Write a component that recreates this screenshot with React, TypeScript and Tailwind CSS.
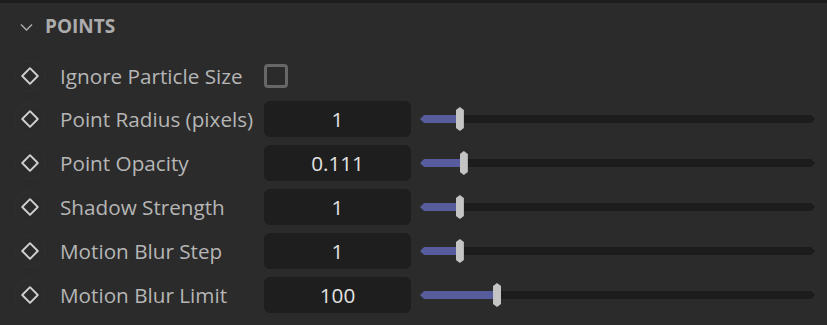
import React from "react";

type Row = {
  label: string;
  value: string;
  pct: number;
};

const rows: Row[] = [
  { label: "Point Radius (pixels)", value: "1", pct: 10.1 },
  { label: "Point Opacity", value: "0.111", pct: 11.1 },
  { label: "Shadow Strength", value: "1", pct: 10.1 },
  { label: "Motion Blur Step", value: "1", pct: 10.1 },
  { label: "Motion Blur Limit", value: "100", pct: 19.5 },
];

const KeyIcon = () => (
  <div className="w-8 h-8 rounded-full border border-[#303030] flex items-center justify-center shrink-0">
    <svg width="20" height="20" viewBox="0 0 20 20">
      <path
        d="M10 2.2 L17.8 10 L10 17.8 L2.2 10 Z"
        fill="none"
        stroke="#d0d0d0"
        strokeWidth="1.9"
        strokeLinejoin="round"
      />
    </svg>
  </div>
);

const Slider = ({ pct }: { pct: number }) => (
  <div className="relative flex-1 h-7 flex items-center">
    <div className="relative w-full h-2 bg-[#1c1c1c] [clip-path:polygon(4px_0,calc(100%-4px)_0,100%_50%,calc(100%-4px)_100%,4px_100%,0_50%)]">
      <div
        className="absolute left-0 top-0 h-full bg-[#575c9c]"
        style={{ width: `${pct}%` }}
      />
    </div>
    <div
      className="absolute top-[2px] w-2 h-6 -ml-1 bg-[#c4c4c4] [clip-path:polygon(50%_0,100%_3px,100%_calc(100%-3px),50%_100%,0_calc(100%-3px),0_3px)]"
      style={{ left: `${pct}%` }}
    />
  </div>
);

export default function App() {
  return (
    <div
      className="w-[827px] h-[325px] bg-[#2b2b2b] overflow-hidden"
      style={{ fontFamily: '"Open Sans", "Noto Sans", sans-serif' }}
    >
      <div className="h-[3px] bg-[#1d1d1d]" />
      <div className="flex items-center h-[46px] pl-[20px]">
        <svg width="13" height="8" viewBox="0 0 13 8" className="mt-[1px]">
          <path d="M1 1.5 L6.5 7 L12 1.5" fill="none" stroke="#a9a9a9" strokeWidth="1.5" />
        </svg>
        <span className="ml-[12px] text-[19px] leading-none font-bold text-[#acacac]">
          POINTS
        </span>
      </div>

      <div className="flex items-center h-[48px] pl-[14px] pr-3 mt-[3px]">
        <KeyIcon />
        <span className="ml-[14px] w-[204px] text-[20.7px] leading-none text-[#b6b6b6] whitespace-nowrap">
          Ignore Particle Size
        </span>
        <div className="w-6 h-6 rounded-[4px] border-[3px] border-[#676767]" />
      </div>

      <div className="flex flex-col gap-2 mt-[1px]">
        {rows.map((r) => (
          <div key={r.label} className="flex items-center h-9 pl-[14px] pr-3">
            <KeyIcon />
            <span className="ml-[14px] w-[204px] text-[20.7px] leading-none text-[#b6b6b6] whitespace-nowrap">
              {r.label}
            </span>
            <div className="w-[147px] h-9 rounded-md bg-[#1e1e1e] flex items-center justify-center text-[20.7px] leading-none text-[#e2e2e2]">
              {r.value}
            </div>
            <div className="ml-[9px] flex-1 flex">
              <Slider pct={r.pct} />
            </div>
          </div>
        ))}
      </div>
    </div>
  );
}
